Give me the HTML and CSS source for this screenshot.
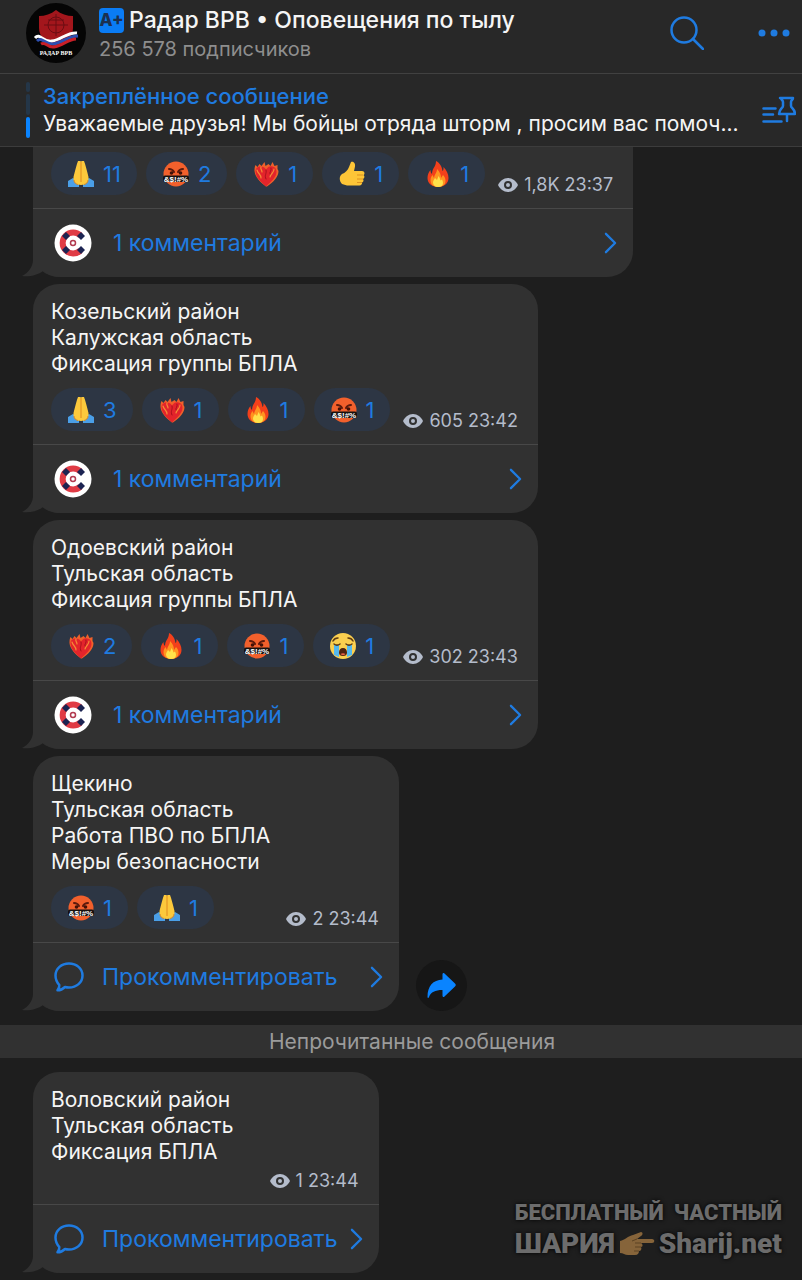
FILE: index.html
```html
<!DOCTYPE html>
<html lang="ru">
<head>
    <meta charset="UTF-8">
    <meta name="viewport" content="width=device-width, initial-scale=1.0">
    <title>Радар ВРВ</title>
    <link rel="stylesheet" href="styles.css">
</head>
<body>

    <!-- Shared icons -->
    <svg class="sprite" aria-hidden="true">
        <symbol id="pray" viewBox="0 0 28 28">
            <path fill="#4a9fe8" d="M1 21l5-3 6 4v5H1zM27 21l-5-3-6 4v5H27z"/>
            <path fill="#fcc93c" d="M11 1h2.500l.5 1 .5-1H17c1.500 4 3 10 4.500 16 .5 3-1 6-4 7.500L14 25l-3.500-.5c-3-1.500-4.500-4.500-4-7.500C8 11 9.500 5 11 1z"/>
            <path fill="none" stroke="#e08a1e" d="M14 2v20M7 20c0 3 2 4 4 4.500M21 20c0 3-2 4-4 4.500"/>
        </symbol>
        <symbol id="swear" viewBox="0 0 28 28">
            <circle cx="14" cy="14" r="12.500" fill="#f2602c"/>
            <path fill="none" stroke="#5c1a0c" stroke-width="2" stroke-linecap="round" d="M7 9c2 0 4 1 5 3M21 9c-2 0-4 1-5 3"/>
            <circle cx="9.500" cy="13" r="1.800" fill="#421208"/>
            <circle cx="18.500" cy="13" r="1.800" fill="#421208"/>
            <rect x="1" y="15.500" width="26" height="6.500" rx="2" fill="#17110f"/>
            <text x="14" y="21.500" class="swear-text">&amp;$!#%</text>
        </symbol>
        <symbol id="heart" viewBox="0 0 28 28">
            <path fill="#f0602a" d="M14 26.500C8 22 3 17 2.500 11c0-2 0-4 1-6l2 2 2-3 2 2 3-4 1 4 3-2 2 2 2-4 2 4 3-1v4l1 2c0 6-5 11-11.500 15.500z"/>
            <path fill="#e3242b" d="M14 26.500C9 22 3.500 17 3.500 11.500c0-4 3-5.500 5.500-5 2 0 4 1 5 3 2-3 4-4 6.500-3 3 .5 4 3 4 5.500 0 5-5.500 10-10.500 14.500z"/>
            <path fill="none" stroke="#f58a35" stroke-width="1.200" stroke-linecap="round" d="M5 10c1 4 4 4 4 8M9 7c-1 2 1 3 1 5M22 9c0 4-3 4-4 8"/>
            <path fill="none" stroke="#a50f1c" stroke-linecap="round" d="M14 10c1 4-2 5 0 9M19 8c1 3-2 4-1 6"/>
        </symbol>
        <symbol id="thumb" viewBox="0 0 28 28">
            <path fill="#fdc537" d="M13 2c3-1 4.500 2 4 4.500L16 11h8c3 0 3 3.500 1.500 4 1.500 1 1 3.500-.5 4 1 1 .5 3-1 3.500.5 1.500-1 3-2.500 3H9l-5-1.500c-3-3-3-8 0-10 3-1 6-4 7-7z"/>
            <path fill="none" stroke="#dd9220" d="M25 15h-6M25 19h-6M24 22.500h-5"/>
        </symbol>
        <symbol id="fire" viewBox="0 0 28 28">
            <path fill="#f3401b" d="M14 27C8 27 3.500 23.500 3.500 18c0-3 1-6 3-8 0 2 .5 3 1.500 4C8 8 12 7 12 1c4 2 6 6 6.500 10 1-.5 1-2 1-4 3 3 5 7 5 11 0 5.500-4.500 9-10.500 9z"/>
            <path fill="#ff9420" d="M14 27c-4 0-7.500-2-7.500-7 0-2 1-4 2-5l1.500 3c.5-4 3-5 3-9 3 3 4 6 4 9l2-3c2 2 2.500 4 2.500 6 0 4-3.500 6-7.500 6z"/>
            <path fill="#ffe24a" d="M14 27c-3 0-5-2-5-4.500 0-2 1.500-3 2-4.500l2 2 1.500-4c1 1 1.500 3 2 4.500l1.500-1c.5 1 1 2 1 3.500 0 2.500-2 4-5 4z"/>
        </symbol>
        <symbol id="cry" viewBox="0 0 28 28">
            <circle cx="14" cy="14" r="13" fill="#fbcf4f"/>
            <path fill="#55b8ee" d="M5 13h5v12l-5-2zM18 13h5v10l-5 2z"/>
            <path fill="none" stroke="#5d3a12" stroke-width="1.500" stroke-linecap="round" d="M4 9c1-2 3-3 5-3M24 9c-1-2-3-3-5-3M5 12c2 1.500 4 1.500 6 0M17 12c2 1.500 4 1.500 6 0"/>
            <path fill="#4f2210" d="M14 16c2.500 0 4 2 4 4.500S16.500 24 14 24s-4-1-4-3.500 1.500-4.500 4-4.500z"/>
            <path fill="#e8634a" d="M11.500 22c1.500-1 3.500-1 5 0-1 1.500-4 1.500-5 0z"/>
        </symbol>
        <symbol id="eye" viewBox="0 0 20 14">
            <path fill="currentColor" d="M10 0c4.500 0 8 3 10 7-2 4-5.500 7-10 7S2 11 0 7c2-4 5.500-7 10-7z"/>
            <circle cx="10" cy="7" r="3" fill="none" stroke="#313131" stroke-width="2"/>
        </symbol>
        <symbol id="chevron" viewBox="0 0 14 24">
            <path class="stroke" d="M2 2l10 10L2 22"/>
        </symbol>
        <symbol id="comment" viewBox="0 0 30 30">
            <path class="stroke" d="M15 1.500c7.500 0 13.500 5 13.500 12S22.500 25.500 15 25.500c-1.500 0-2.500 0-4-.5-2 2-4.500 3.300-7.500 3.300 1.300-1.600 2-3.300 1.800-5.300C3 20.500 1.500 17.500 1.500 13.500c0-7 6-12 13.500-12z"/>
        </symbol>
        <symbol id="buoy" viewBox="0 0 38 38">
            <circle cx="19" cy="19" r="18.500" fill="#fff"/>
            <path fill="none" stroke="#e03b45" stroke-width="6" d="M26.500 11.500a10.500 10.500 0 1 0 0 15"/>
            <path fill="#1c2452" d="M23 12l4-4 4 4-4 4zM23 26l4 4 4-4-4-4zM8 12l4-4 4 4-4 4zM8 26l4 4 4-4-4-4z"/>
            <circle cx="19" cy="19" r="2.500" fill="#fff" stroke="#b23b50" stroke-width="1.500"/>
        </symbol>
        <symbol id="tail" viewBox="0 0 40 30">
            <path fill="#313131" d="M11 0v13c0 7-5 13-11 16 8 1 16-1 21-5 5 4 11 6 18 6V0z"/>
        </symbol>
    </svg>

    <header class="header">
        <svg class="avatar" viewBox="0 0 60 60">
            <circle cx="30" cy="30" r="30" fill="#050505"/>
            <path fill="#a3161c" d="M13 13c6 0 12-2 17-6 5 4 11 6 17 6v12c0 8-6 15-17 19-11-4-17-11-17-19z"/>
            <circle cx="30" cy="22" r="8" fill="none" stroke="#6b0d12"/>
            <path fill="none" stroke="#6b0d12" d="M18 22h24M30 11v22M22 17h16"/>
            <path fill="none" stroke="#fff" stroke-width="3" d="M9 35c5-6 8 5 17 3 9-1 15-9 25-8"/>
            <path fill="none" stroke="#2d4fb0" stroke-width="3" d="M11 38c5-5 8 4 16 3 9-1 15-8 25-8"/>
            <path fill="none" stroke="#c81f27" stroke-width="3" d="M15 41c5-3 6 4 13 3 9-1 14-8 22-8"/>
            <text x="30" y="52" class="avatar-text">РАДАР ВРВ</text>
        </svg>
        <div class="channel">
            <h1 class="channel-name"><span class="badge">A+</span>Радар ВРВ • Оповещения по тылу</h1>
            <p class="subscribers">256 578 подписчиков</p>
        </div>
        <button class="icon-button" aria-label="Поиск">
            <svg width="34" height="34" viewBox="0 0 34 34"><circle class="stroke" cx="14" cy="14" r="12.500"/><path class="stroke" d="M23 23l10 10"/></svg>
        </button>
        <button class="icon-button" aria-label="Меню">
            <svg width="32" height="8" viewBox="0 0 32 8" fill="currentColor"><circle cx="4" cy="4" r="3.500"/><circle cx="16" cy="4" r="3.500"/><circle cx="28" cy="4" r="3.500"/></svg>
        </button>
    </header>

    <section class="pinned">
        <div class="pinned-marks"><i></i><i></i><i class="active"></i></div>
        <div class="pinned-body">
            <h2>Закреплённое сообщение</h2>
            <p>Уважаемые друзья! Мы бойцы отряда шторм , просим вас помоч...</p>
        </div>
        <button class="icon-button" aria-label="Закреплённые сообщения">
            <svg width="34" height="28" viewBox="0 0 34 28"><path class="stroke" d="M1.500 12.500h12M1.500 18.500h9.500M1.500 25.500h18M18 2h13M19 2c0 2 2 2 2 4v4c0 2-4 3-4 8h16c0-5-4-6-4-8V6c0-2 2-2 2-4M25 18v7"/></svg>
        </button>
    </section>

    <main class="chat">
        <article class="message cut">
            <div class="message-footer">
                <button class="reaction"><svg><use href="#pray"/></svg>11</button>
                <button class="reaction"><svg><use href="#swear"/></svg>2</button>
                <button class="reaction"><svg><use href="#heart"/></svg>1</button>
                <button class="reaction"><svg><use href="#thumb"/></svg>1</button>
                <button class="reaction"><svg><use href="#fire"/></svg>1</button>
                <span class="meta"><svg><use href="#eye"/></svg>1,8K 23:37</span>
            </div>
            <button class="comments"><svg class="buoy"><use href="#buoy"/></svg>1 комментарий<svg class="chevron"><use href="#chevron"/></svg></button>
            <svg class="tail"><use href="#tail"/></svg>
        </article>

        <article class="message">
            <p class="text">Козельский район<br>Калужская область<br>Фиксация группы БПЛА</p>
            <div class="message-footer">
                <button class="reaction"><svg><use href="#pray"/></svg>3</button>
                <button class="reaction"><svg><use href="#heart"/></svg>1</button>
                <button class="reaction"><svg><use href="#fire"/></svg>1</button>
                <button class="reaction"><svg><use href="#swear"/></svg>1</button>
                <span class="meta"><svg><use href="#eye"/></svg>605 23:42</span>
            </div>
            <button class="comments"><svg class="buoy"><use href="#buoy"/></svg>1 комментарий<svg class="chevron"><use href="#chevron"/></svg></button>
            <svg class="tail"><use href="#tail"/></svg>
        </article>

        <article class="message">
            <p class="text">Одоевский район<br>Тульская область<br>Фиксация группы БПЛА</p>
            <div class="message-footer">
                <button class="reaction"><svg><use href="#heart"/></svg>2</button>
                <button class="reaction"><svg><use href="#fire"/></svg>1</button>
                <button class="reaction"><svg><use href="#swear"/></svg>1</button>
                <button class="reaction"><svg><use href="#cry"/></svg>1</button>
                <span class="meta"><svg><use href="#eye"/></svg>302 23:43</span>
            </div>
            <button class="comments"><svg class="buoy"><use href="#buoy"/></svg>1 комментарий<svg class="chevron"><use href="#chevron"/></svg></button>
            <svg class="tail"><use href="#tail"/></svg>
        </article>

        <div class="message-row">
            <article class="message wide">
                <p class="text">Щекино<br>Тульская область<br>Работа ПВО по БПЛА<br>Меры безопасности</p>
                <div class="message-footer">
                    <button class="reaction"><svg><use href="#swear"/></svg>1</button>
                    <button class="reaction"><svg><use href="#pray"/></svg>1</button>
                    <span class="meta"><svg><use href="#eye"/></svg>2 23:44</span>
                </div>
                <button class="comments"><svg class="bubble"><use href="#comment"/></svg>Прокомментировать<svg class="chevron"><use href="#chevron"/></svg></button>
                <svg class="tail"><use href="#tail"/></svg>
            </article>
            <button class="share" aria-label="Поделиться">
                <svg width="30" height="26" viewBox="0 0 30 26"><path fill="#0a84ff" d="M15.500 1.500c0-1.500 1-2 2-1L28 10.500c1 1 1 2 0 3L17.500 23.500c-1 1-2 .5-2-1V17C8 17 4 19 2 24c-.5 1.500-1.500 1-1.500 0C.5 13 6 7 15.500 6.500z"/></svg>
            </button>
        </div>

        <div class="unread">Непрочитанные сообщения</div>

        <article class="message">
            <p class="text">Воловский район<br>Тульская область<br>Фиксация БПЛА</p>
            <div class="message-footer plain">
                <span class="meta"><svg><use href="#eye"/></svg>1 23:44</span>
            </div>
            <button class="comments"><svg class="bubble"><use href="#comment"/></svg>Прокомментировать<svg class="chevron"><use href="#chevron"/></svg></button>
            <svg class="tail"><use href="#tail"/></svg>
        </article>
    </main>

    <aside class="watermark">
        <div class="watermark-line"><span>БЕСПЛАТНЫЙ</span><span>ЧАСТНЫЙ</span></div>
        <div class="watermark-line big">
            <span>ШАРИЯ</span>
            <svg width="36" height="24" viewBox="0 0 36 24">
                <path fill="#86643a" d="M1 9c5-1 8-5 13-6l8-3c2 0 2 3 0 4l-4 3h15c3 0 3 4 0 4H22c2 1 2 4 0 4 1 2 0 4-2 4 0 2-1 4-4 4H9c-3 0-5-2-8-2z"/>
                <path fill="none" stroke="#5c4222" d="M22 11h-6M22 15h-6M20 19h-5M18 7l-5 2"/>
            </svg>
            <span>Sharij.net</span>
        </div>
    </aside>

</body>
</html>
```

FILE: styles.css
```css
body {
    margin: 0;
    min-height: 100vh;
    background: #1e1e1e;
    color: #f5f5f5;
    font-family: Inter, "Liberation Sans", sans-serif;
    font-size: 21px;
    overflow-x: hidden;
}

h1, h2, p {
    margin: 0;
    font-weight: 400;
}

button {
    padding: 0;
    border: none;
    background: none;
    color: #1f7be0;
    font: inherit;
    cursor: pointer;
}

.sprite {
    display: none;
}

.stroke {
    fill: none;
    stroke: currentColor;
    stroke-width: 2.5;
    stroke-linecap: round;
    stroke-linejoin: round;
}

.swear-text {
    fill: #fff;
    font: bold 8px "Liberation Sans", sans-serif;
    text-anchor: middle;
}

/* Header */
.header {
    display: flex;
    align-items: center;
    padding: 3px 12px 10px 26px;
    background: #282828;
    border-bottom: 1px solid #414141;
}

.avatar {
    width: 60px;
    height: 60px;
    margin-right: 13px;
}

.avatar-text {
    fill: #fff;
    font: bold 6px "Liberation Serif", serif;
    text-anchor: middle;
}

.channel {
    flex: 1;
    padding-top: 2px;
}

.channel-name {
    display: flex;
    align-items: center;
    gap: 5px;
    font-size: 23px;
    font-weight: 500;
    line-height: 30px;
}

.badge {
    width: 25px;
    border-radius: 4px;
    background: #0a7cf5;
    color: #1c3050;
    font-size: 17px;
    font-weight: 800;
    line-height: 25px;
    text-align: center;
}

.subscribers {
    color: #8e8e8e;
    font-size: 20px;
    line-height: 28px;
}

.icon-button {
    display: flex;
    margin-left: 54px;
}

/* Pinned message */
.pinned {
    display: flex;
    align-items: center;
    padding: 8px 6px 8px 26px;
    background: #282828;
    border-bottom: 1px solid #3c3c3c;
}

.pinned-marks {
    display: flex;
    flex-direction: column;
    gap: 2px;
    height: 56px;
    margin-right: 13px;
}

.pinned-marks i {
    flex: 2;
    width: 4px;
    border-radius: 2px;
    background: #243648;
}

.pinned-marks i:first-child {
    flex: 1;
}

.pinned-marks .active {
    background: #0a84ff;
}

.pinned-body {
    flex: 1;
    min-width: 0;
    line-height: 27px;
}

.pinned-body h2 {
    color: #1f7be0;
    font-size: 22px;
    font-weight: 500;
}

.pinned-body p {
    overflow: hidden;
    text-overflow: ellipsis;
    white-space: nowrap;
}

.pinned .icon-button {
    margin-left: 12px;
}

/* Chat */
.chat {
    display: flex;
    flex-direction: column;
    align-items: flex-start;
    gap: 7px;
    padding-bottom: 7px;
}

.message {
    position: relative;
    z-index: 0;
    margin-left: 33px;
    border-radius: 26px;
    background: #313131;
}

.message.cut {
    border-radius: 0 0 26px 26px;
    padding-top: 5px;
}

.message.wide {
    min-width: 366px;
}

.message-row {
    display: flex;
    align-items: flex-end;
    gap: 17px;
}

.text {
    padding: 15px 18px 0;
    line-height: 26px;
}

.message-footer {
    display: flex;
    gap: 9px;
    padding: 11px 20px 13px 18px;
}

.message.cut .message-footer {
    padding-top: 0;
}

.message-footer.plain {
    padding-top: 6px;
}

.reaction {
    display: flex;
    align-items: center;
    gap: 8px;
    height: 43px;
    padding: 0 16px;
    border-radius: 22px;
    background: #2d3644;
    font-size: 22px;
}

.reaction svg {
    width: 28px;
    height: 28px;
}

.meta {
    display: flex;
    align-items: center;
    align-self: flex-end;
    gap: 6px;
    margin-left: auto;
    padding-left: 4px;
    color: #b4bccb;
    font-size: 18px;
    line-height: 20px;
}

.meta svg {
    width: 20px;
    height: 14px;
}

.comments {
    display: flex;
    align-items: center;
    width: 100%;
    height: 69px;
    padding: 0 16px 0 21px;
    border-top: 1px solid #484848;
    font-size: 23px;
}

.comments .buoy {
    width: 38px;
    height: 38px;
    margin-right: 21px;
}

.comments .bubble {
    width: 30px;
    height: 30px;
    margin-right: 18px;
}

.comments .chevron {
    width: 13px;
    height: 22px;
    margin-left: auto;
    padding-left: 12px;
}

.tail {
    position: absolute;
    z-index: -1;
    left: -11px;
    bottom: 0;
    width: 40px;
    height: 30px;
}

.share {
    display: flex;
    align-items: center;
    justify-content: center;
    width: 51px;
    height: 51px;
    border-radius: 50%;
    background: #161616;
}

.unread {
    align-self: stretch;
    margin: 7px 0;
    padding-left: 22px;
    background: #313131;
    color: #9b9b9b;
    line-height: 33px;
    text-align: center;
}

/* Watermark over the chat corner */
.watermark {
    position: absolute;
    top: 1197px;
    right: 20px;
    z-index: 1;
    color: #6c6c6c;
    font-family: Roboto, "Liberation Sans", sans-serif;
    font-size: 22px;
    font-weight: 900;
    line-height: 31px;
    text-shadow: 0 0 4px #000;
}

.watermark-line {
    display: flex;
    align-items: center;
    gap: 10px;
}

.watermark .big {
    gap: 4px;
    font-size: 28px;
}
```
